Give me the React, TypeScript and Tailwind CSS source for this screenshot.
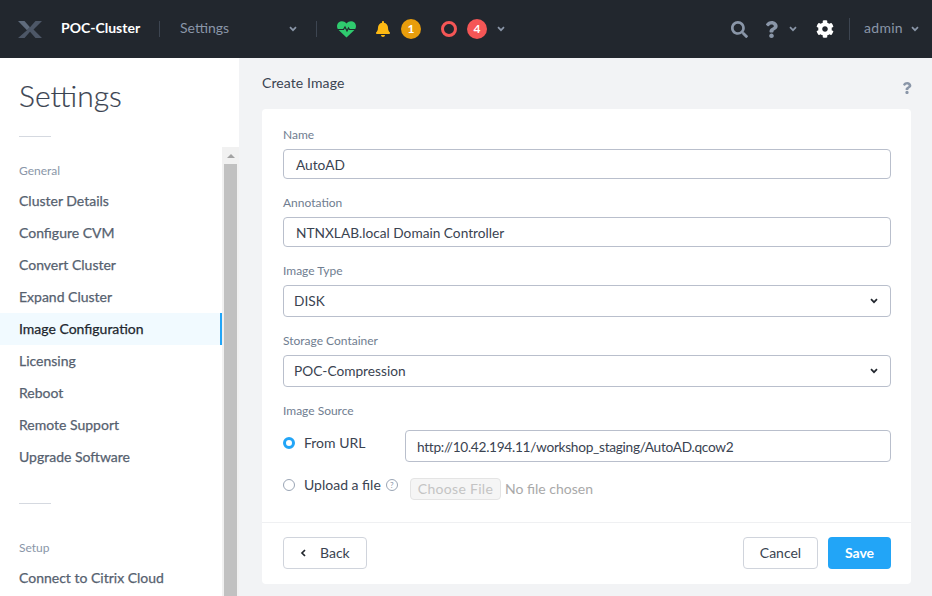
import { FaBell, FaCog, FaQuestion, FaSearch } from "react-icons/fa";

const font = "font-['Lato','Liberation_Sans',sans-serif]";

function Chevron({ className, color = "#8a96a8" }: { className?: string; color?: string }) {
  return (
    <svg width="8" height="6" viewBox="0 0 8 6" className={className}>
      <polyline points="1,1.2 4,4.2 7,1.2" fill="none" stroke={color} strokeWidth="1.7" />
    </svg>
  );
}

function Logo() {
  return (
    <svg width="24" height="17" viewBox="0 0 24 17">
      <path d="M0 0h6.5L12 6.2 9 9.2z" fill="#5f6b7c" />
      <path d="M0 17h6.5L12 10.8 17.500 17H24L15.500 8.500 24 0h-6.500L12 6.200 9 9.200z" fill="#4d5767" />
    </svg>
  );
}

function Heart() {
  return (
    <svg width="19" height="17" viewBox="0 0 19 17">
      <path
        d="M9.500 16.500 1.600 9C-.6 6.800-.4 3.300 1.600 1.500 3.700-.4 7.300-.2 9.500 2.500 11.700-.2 15.300-.4 17.400 1.500 19.400 3.300 19.600 6.800 17.400 9z"
        fill="#2fca6e"
      />
      <polyline points="0.500,8.500 6.500,8.500 8,6 10,10 11.500,7 12.500,8.500 18.500,8.500" fill="none" stroke="#22272e" strokeWidth="1.200" />
    </svg>
  );
}

function Field({ label, value }: { label: string; value: string }) {
  return (
    <div className="mb-4">
      <p className="mb-[6px] h-4 text-[12px] leading-4 text-[#6f7d90]">{label}</p>
      <div className="flex h-[30px] items-center rounded border border-[#b9bfcc] px-3 pt-[2px] text-[13.7px] text-[#3a4351]">
        {value}
      </div>
    </div>
  );
}

function SelectField({ label, value }: { label: string; value: string }) {
  return (
    <div className="mb-4">
      <p className="mb-[6px] h-4 text-[12px] leading-4 text-[#6f7d90]">{label}</p>
      <div className="flex h-8 items-center justify-between rounded border border-[#b9bfcc] pl-[10px] pr-[12px] text-[13.7px] text-[#3a4351]">
        {value}
        <Chevron color="#22272e" />
      </div>
    </div>
  );
}

const generalItems = [
  "Cluster Details",
  "Configure CVM",
  "Convert Cluster",
  "Expand Cluster",
  "Image Configuration",
  "Licensing",
  "Reboot",
  "Remote Support",
  "Upgrade Software",
];

function Sidebar() {
  return (
    <aside className="flex w-[239px] shrink-0 flex-col bg-white">
      <div className="h-[89px] shrink-0 pl-[19px]">
        <h1 className="pt-[17px] text-[30px] font-light leading-[41px] text-[#3a4351] [-webkit-text-stroke:0.2px]">Settings</h1>
        <div className="mt-[20px] h-px w-[32px] bg-[#d5d9e0]" />
      </div>
      <div className="flex min-h-0 flex-1">
        <nav className="w-[222px] shrink-0 overflow-hidden pt-[16px]">
          <p className="mb-[6px] h-4 pl-[19px] text-[12px] leading-4 text-[#8a96a8]">General</p>
          {generalItems.map((item) =>
            item === "Image Configuration" ? (
              <div
                key={item}
                className="flex h-8 items-center border-r-[2px] border-[#22a5f7] bg-[#f1faff] pb-[2px] pl-[19px] text-[14px] text-[#22272e] [-webkit-text-stroke:0.25px]"
              >
                {item}
              </div>
            ) : (
              <div key={item} className="flex h-8 items-center pb-[2px] pl-[19px] text-[14px] text-[#56616f] [-webkit-text-stroke:0.25px]">
                {item}
              </div>
            ),
          )}
          <div className="ml-[19px] mt-[30px] h-px w-[32px] bg-[#d5d9e0]" />
          <p className="mb-[6px] mt-[36px] h-4 pl-[19px] text-[12px] leading-4 text-[#8a96a8]">Setup</p>
          <div className="flex h-8 items-center pb-[2px] pl-[19px] text-[14px] text-[#56616f] [-webkit-text-stroke:0.25px]">Connect to Citrix Cloud</div>
        </nav>
        <div className="flex w-[17px] shrink-0 flex-col bg-[#f1f1f1]">
          <div className="flex h-[17px] items-center justify-center">
            <svg width="8" height="4" viewBox="0 0 8 4">
              <path d="M0 4 4 0l4 4z" fill="#a3a3a3" />
            </svg>
          </div>
          <div className="mx-[2px] flex-1 bg-[#c1c1c1]" />
        </div>
      </div>
    </aside>
  );
}

function Header() {
  return (
    <header className="flex h-[58px] shrink-0 items-center bg-[#22272e]">
      <div className="ml-[18px] w-[43px]">
        <Logo />
      </div>
      <span className="w-[98px] pb-[4px] text-[14px] font-bold text-white">POC-Cluster</span>
      <div className="h-4 w-px bg-[#3d4551]" />
      <span className="ml-[20px] w-[109px] pb-[4px] text-[14px] text-[#8a96a8]">Settings</span>
      <Chevron />
      <div className="ml-[19px] h-4 w-px bg-[#3d4551]" />
      <div className="ml-[20px] w-[19px]">
        <Heart />
      </div>
      <FaBell className="ml-[19px] text-[16px] text-[#fdb913]" />
      <span className="ml-[10px] flex h-5 w-5 items-center justify-center rounded-full bg-[#e89d0c] pb-[1px] text-[12px] font-bold text-white">1</span>
      <span className="ml-[20px] h-4 w-4 rounded-full border-[3px] border-[#f55656]" />
      <span className="ml-[10px] flex h-5 w-5 items-center justify-center rounded-full bg-[#f55656] pb-[1px] text-[12px] font-bold text-white">4</span>
      <Chevron className="ml-[10px]" />
      <div className="flex-1" />
      <FaSearch className="text-[17px] text-[#8a96a8]" />
      <FaQuestion className="ml-[15px] text-[17px] text-[#8a96a8]" />
      <Chevron className="ml-[9px]" />
      <FaCog className="ml-[19px] text-[18px] text-white" />
      <div className="ml-[15px] h-[22px] w-px bg-[#3d4551]" />
      <span className="ml-[14px] pb-[4px] text-[14px] tracking-[0.3px] text-[#8a96a8]">admin</span>
      <Chevron className="ml-[8px] mr-[13px]" />
    </header>
  );
}

function CreateImageForm() {
  return (
    <section className="rounded bg-white">
      <div className="pl-[21px] pr-[20px] pt-[18px]">
        <Field label="Name" value="AutoAD" />
        <Field label="Annotation" value="NTNXLAB.local Domain Controller" />
        <SelectField label="Image Type" value="DISK" />
        <SelectField label="Storage Container" value="POC-Compression" />
        <p className="mb-[11px] h-4 text-[12px] leading-4 text-[#6f7d90]">Image Source</p>
        <div className="flex items-start">
          <div className="flex w-[122px] items-center pt-[4px]">
            <span className="h-3 w-3 rounded-full border-[3.500px] border-[#22a5f7] bg-white" />
            <span className="ml-[9px] text-[14px] leading-[18px] text-[#3a4351]">From URL</span>
          </div>
          <div className="flex h-8 flex-1 items-center rounded border border-[#b9bfcc] px-[11px] pt-[2px] text-[13.7px] tracking-[-0.3px] text-[#3a4351]">
            http://10.42.194.11/workshop_staging/AutoAD.qcow2
          </div>
        </div>
        <div className="mt-[16px] flex h-[22px] items-start">
          <div className="flex h-[14px] w-[127px] items-center">
            <span className="h-3 w-3 rounded-full border border-[#9aa5b5] bg-white" />
            <span className="ml-[9px] text-[14px] leading-[14px] text-[#3a4351]">Upload a file</span>
            <span className="ml-[5px] flex h-3 w-3 items-center justify-center rounded-full border border-[#9aa5b5] text-[8px] leading-none text-[#8a96a8]">?</span>
          </div>
          <span className="flex h-[22px] w-[91px] items-center justify-center rounded-sm border border-[#e4e4e4] bg-[#f5f5f5] text-[14px] leading-[16px] tracking-[0.3px] text-[#c4c4c4]">Choose File</span>
          <span className="ml-[4px] text-[14px] leading-[22px] text-[#a9a9a9]">No file chosen</span>
        </div>
      </div>
      <div className="mt-[22px] flex h-[62px] items-start justify-between border-t border-[#eff0f2] pl-[21px] pr-[20px] pt-[14px]">
        <span className="flex h-8 w-[84px] items-center rounded border border-[#d0d4dc] pb-[2px] pl-4 text-[14px] text-[#3a4351]">
          <svg width="6" height="8" viewBox="0 0 6 8" className="mt-[2px]">
            <polyline points="5,1 2,4 5,7" fill="none" stroke="#22272e" strokeWidth="1.700" />
          </svg>
          <span className="ml-[14px]">Back</span>
        </span>
        <div className="flex gap-[10px]">
          <span className="flex h-8 w-[75px] items-center justify-center rounded border border-[#d0d4dc] pb-[2px] text-[14px] text-[#3a4351]">Cancel</span>
          <span className="flex h-8 w-[63px] items-center justify-center rounded bg-[#22a5f7] pb-[2px] text-[14px] font-bold text-white">Save</span>
        </div>
      </div>
    </section>
  );
}

export default function App() {
  return (
    <div className={`flex h-[596px] w-[932px] flex-col overflow-hidden bg-[#f2f3f5] ${font}`}>
      <Header />
      <div className="flex min-h-0 flex-1">
        <Sidebar />
        <main className="flex-1 pl-[23px] pr-[21px]">
          <div className="flex h-[51px] items-start justify-between pt-[15px]">
            <span className="text-[14px] leading-[19px] tracking-[0.1px] text-[#3a4351]">Create Image</span>
            <FaQuestion className="-mr-[2px] mt-[9px] text-[12px] text-[#8a96a8]" />
          </div>
          <CreateImageForm />
        </main>
      </div>
    </div>
  );
}
